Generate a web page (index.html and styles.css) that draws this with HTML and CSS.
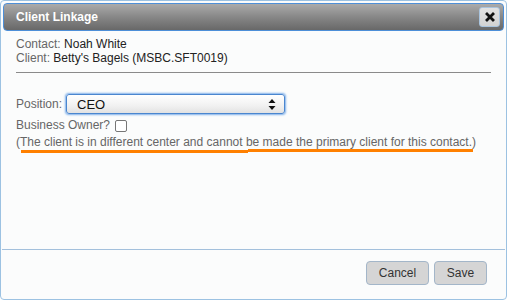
FILE: index.html
```html
<!DOCTYPE html>
<html lang="en">
<head>
    <meta charset="UTF-8">
    <meta name="viewport" content="width=device-width, initial-scale=1.0">
    <title>Client Linkage</title>
    <link rel="stylesheet" href="styles.css">
</head>
<body>
    <div class="dialog">
        <!-- Title bar -->
        <div class="dialog-title">
            <span>Client Linkage</span>
            <button class="btn-close" title="Close">
                <svg width="10" height="10" viewBox="0 0 10 10">
                    <path d="M2 2 L8 8 M8 2 L2 8" stroke="#111" stroke-width="2.8" stroke-linecap="square"/>
                </svg>
            </button>
        </div>

        <!-- Body -->
        <div class="dialog-content">
            <div class="info-line"><span class="label">Contact:</span> Noah White</div>
            <div class="info-line"><span class="label">Client:</span> Betty's Bagels (MSBC.SFT0019)</div>
            <hr class="divider">

            <div class="form-row">
                <label class="label" for="position">Position:</label>
                <span class="select-wrap">
                    <select id="position" class="select">
                        <option>CEO</option>
                        <option>CFO</option>
                        <option>Owner</option>
                    </select>
                    <svg class="select-arrows" width="8" height="11" viewBox="0 0 8 11">
                        <path d="M4 0 L7.5 4 L0.5 4 Z M4 11 L7.5 7 L0.5 7 Z" fill="#111"/>
                    </svg>
                </span>
            </div>

            <div class="owner-row">
                <label class="label" for="owner">Business Owner?</label>
                <input type="checkbox" id="owner" class="checkbox">
            </div>

            <div class="note">
                (The client is in different center and cannot be made the primary client for this contact.)
                <span class="mark mark-1"></span>
                <span class="mark mark-2"></span>
            </div>
        </div>

        <!-- Buttons -->
        <div class="dialog-footer">
            <button class="btn btn-cancel">Cancel</button>
            <button class="btn btn-save">Save</button>
        </div>
    </div>
</body>
</html>
```

FILE: styles.css
```css
/* Page */
body {
    margin: 0;
    background: #ffffff;
    font-family: "Liberation Sans", Arial, sans-serif;
    font-size: 12px;
    color: #222;
}

/* Dialog box */
.dialog {
    box-sizing: border-box;
    width: 507px;
    height: 300px;
    border: 1px solid #9cc2e2;
    border-radius: 4px;
    padding: 2px 2px 0 2px;
    background: #fbfcfc;
    display: flex;
    flex-direction: column;
}

/* Title bar */
.dialog-title {
    box-sizing: border-box;
    height: 28px;
    border: 1px solid #4d8fd8;
    border-radius: 4px;
    background: linear-gradient(#ababab, #878787 50%, #686868);
    color: #ffffff;
    font-weight: bold;
    display: flex;
    align-items: center;
    justify-content: space-between;
    padding: 0 3px 0 12px;
}

.btn-close {
    box-sizing: border-box;
    width: 21px;
    height: 20px;
    padding: 0;
    border: 1px solid #a9c4de;
    border-radius: 3px;
    background: linear-gradient(#e2e2e2, #d2d2d2);
    display: flex;
    align-items: center;
    justify-content: center;
    cursor: pointer;
}

/* Content */
.dialog-content {
    flex: 1;
    padding: 6px 13px 0 13px;
}

.info-line {
    line-height: 14px;
}

.label {
    color: #666;
}

.divider {
    margin: 7px 0 0 0;
    border: none;
    border-top: 1px solid #8a8a8a;
    height: 0;
}

.form-row {
    display: flex;
    align-items: center;
    margin-top: 21px;
    height: 20px;
}

.form-row .label {
    margin-right: 4px;
}

.select-wrap {
    position: relative;
    display: inline-block;
}

.select {
    -webkit-appearance: none;
    appearance: none;
    box-sizing: border-box;
    width: 219px;
    height: 20px;
    padding: 0 0 0 10px;
    border: 1px solid #4a86cf;
    border-radius: 3px;
    box-shadow: 0 0 2px 1px #7fb0ea;
    background: linear-gradient(#ffffff, #f1f1f1 60%, #e2e2e2);
    font-family: "Liberation Sans", Arial, sans-serif;
    font-size: 13px;
    color: #111;
    outline: none;
}

.select-arrows {
    position: absolute;
    right: 9px;
    top: 5px;
    pointer-events: none;
}

.owner-row {
    display: flex;
    align-items: center;
    margin-top: 3px;
    line-height: 17px;
}

.checkbox {
    -webkit-appearance: none;
    appearance: none;
    box-sizing: border-box;
    width: 12px;
    height: 12px;
    margin: 0 0 0 5px;
    border: 1px solid #767676;
    border-radius: 2px;
    background: #ffffff;
}

.note {
    position: relative;
    color: #666;
    line-height: 17px;
}

/* Orange highlight under the note */
.mark {
    position: absolute;
    height: 3px;
    background: #ff8000;
}

.mark-1 {
    left: 5px;
    width: 227px;
    top: 16px;
}

.mark-2 {
    left: 232px;
    width: 225px;
    top: 15px;
}

/* Footer */
.dialog-footer {
    box-sizing: border-box;
    height: 50px;
    margin: 0 -1px;
    border-top: 1px solid #a3c0dc;
    padding: 11px 18px 0 0;
    display: flex;
    justify-content: flex-end;
    align-items: flex-start;
    gap: 5px;
}

.btn {
    box-sizing: border-box;
    height: 24px;
    border: 1px solid #a3b6c9;
    border-radius: 4px;
    background: #d5d5d5;
    font-family: "Liberation Sans", Arial, sans-serif;
    font-size: 12px;
    color: #333;
    cursor: pointer;
}

.btn-cancel {
    width: 63px;
}

.btn-save {
    width: 53px;
}
```
